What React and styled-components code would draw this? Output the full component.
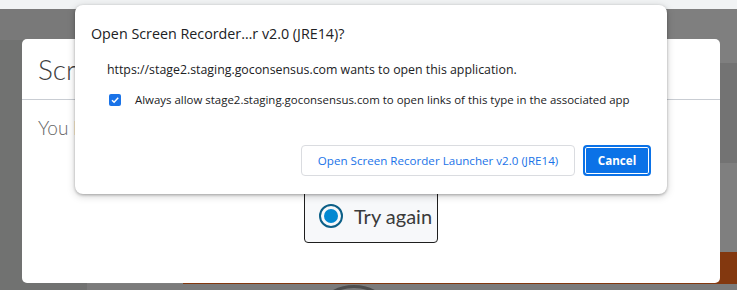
import React from 'react'
import styled, { createGlobalStyle } from 'styled-components'

const GlobalStyle = createGlobalStyle`
  html, body {
    margin: 0;
    padding: 0;
    background: #7f7f7f;
  }
  * {
    box-sizing: border-box;
  }
`

const Page = styled.div`
  position: relative;
  width: 737px;
  height: 290px;
  overflow: hidden;
  background: #7f7f7f;
  font-family: 'Open Sans', 'Noto Sans', sans-serif;
`

const ChromeStrip = styled.div`
  height: 9px;
  background: #f1f3f4;
`

const Shell = styled.div`
  display: flex;
  height: 281px;
`

const SideRail = styled.div`
  width: 87px;
  flex-shrink: 0;
  background: linear-gradient(#797979 0 31px, #717271 31px);
`

const MainCol = styled.div`
  flex: 1;
  display: flex;
  flex-direction: column;
`

const Band = styled.div`
  height: ${p => p.h}px;
  flex-shrink: 0;
  background: ${p => p.color};
`

const FooterRow = styled.div`
  display: flex;
  height: 32px;
  flex-shrink: 0;
`

const FooterGap = styled.div`
  width: 96px;
  background: #7f7f7f;
`

const FooterBar = styled.div`
  flex: 1;
  background: #83380f;
`

const BottomRow = styled.div`
  flex: 1;
  overflow: hidden;
  display: flex;
  background: #7b7b7b;
`

const RecordRing = styled.div`
  width: 90px;
  height: 90px;
  margin: 1px 0 0 222px;
  flex-shrink: 0;
  border: 3px solid #4d4d4d;
  border-radius: 50%;
`

/* page modal underneath the browser prompt */
const Modal = styled.div`
  position: absolute;
  left: 22px;
  top: 39px;
  width: 698px;
  height: 244px;
  background: #fff;
  border-radius: 5px;
  display: flex;
  flex-direction: column;
  font-family: Lato, 'Open Sans', sans-serif;
`

const ModalHeader = styled.div`
  height: 61px;
  flex-shrink: 0;
  display: flex;
  align-items: center;
  padding: 0 16px;
  border-bottom: 1px solid #c9cdd3;
  font-size: 28px;
  font-weight: 300;
  color: #3f3f3f;
  white-space: nowrap;
`

const ModalBody = styled.div`
  flex: 1;
  display: flex;
  flex-direction: column;
  padding: 14px 16px 0;
`

const BodyText = styled.div`
  font-size: 19px;
  font-weight: 300;
  color: #666;
  line-height: 28px;
  white-space: nowrap;
`

const ChoiceButton = styled.div`
  align-self: center;
  margin-top: 46px;
  width: 134px;
  height: 55px;
  display: flex;
  align-items: center;
  gap: 11px;
  padding-left: 14px;
  background: #f7f8fa;
  border: 1px solid #1e1e1e;
  border-radius: 4px;
  font-size: 20px;
  color: #3a3a3a;
  white-space: nowrap;
`

const Radio = styled.span`
  width: 24px;
  height: 24px;
  flex-shrink: 0;
  border-radius: 50%;
  border: 2.5px solid #0c5f87;
  display: flex;
  align-items: center;
  justify-content: center;

  &::after {
    content: '';
    width: 14px;
    height: 14px;
    border-radius: 50%;
    background: #0288d1;
  }
`

/* browser external-protocol prompt */
const Prompt = styled.div`
  position: absolute;
  left: 75px;
  top: 5px;
  width: 592px;
  height: 189px;
  background: #fff;
  border-radius: 8px;
  box-shadow: 0 1px 3px rgba(0, 0, 0, 0.28), 0 2px 8px rgba(0, 0, 0, 0.18);
  padding: 19px 16px 0;
  display: flex;
  flex-direction: column;
  color: #202124;
  white-space: nowrap;
`

const PromptTitle = styled.div`
  font-size: 14.3px;
  line-height: 20px;
`

const PromptText = styled.div`
  margin: 17px 0 0 16px;
  font-size: 12.35px;
  line-height: 18px;
`

const CheckRow = styled.label`
  display: flex;
  align-items: center;
  gap: 14px;
  margin: 13px 0 0 18px;
  font-size: 11.45px;
  line-height: 16px;
`

const CheckBox = styled.span`
  width: 12px;
  height: 12px;
  flex-shrink: 0;
  border-radius: 2px;
  background: #1a73e8;
  display: flex;
  align-items: center;
  justify-content: center;
`

const ButtonRow = styled.div`
  display: flex;
  justify-content: flex-end;
  gap: 8px;
  margin-top: 37px;
`

const Button = styled.button`
  height: 31px;
  padding: 0;
  border-radius: 4px;
  font-family: inherit;
  font-size: 11.6px;
  font-weight: ${p => (p.primary ? 700 : 500)};
  color: ${p => (p.primary ? '#fff' : '#1a73e8')};
  background: ${p => (p.primary ? '#0b72e7' : '#fff')};
  border: ${p => (p.primary ? '2px solid #0b72e7' : '1px solid #dadce0')};
  box-shadow: ${p => (p.primary ? 'inset 0 0 0 1px #fff' : 'none')};
  width: ${p => p.w}px;
  white-space: nowrap;
`

export default function App() {
  return (
    <>
      <GlobalStyle />
      <Page>
        <ChromeStrip />
        <Shell>
          <SideRail />
          <MainCol>
            <Band h={54} color="#7f7f7f" />
            <Band h={100} color="#737373" />
            <Band h={89} color="#7f7f7f" />
            <FooterRow>
              <FooterGap />
              <FooterBar />
            </FooterRow>
            <BottomRow>
              <RecordRing />
            </BottomRow>
          </MainCol>
        </Shell>

        <Modal>
          <ModalHeader>Screen Recorder</ModalHeader>
          <ModalBody>
            <BodyText>You have to allow the Screen Recorder Launcher to open.</BodyText>
            <ChoiceButton>
              <Radio />
              Try again
            </ChoiceButton>
          </ModalBody>
        </Modal>

        <Prompt>
          <PromptTitle>Open Screen Recorder…r v2.0 (JRE14)?</PromptTitle>
          <PromptText>
            https://stage2.staging.goconsensus.com wants to open this application.
          </PromptText>
          <CheckRow>
            <CheckBox>
              <svg width="10" height="10" viewBox="0 0 10 10">
                <path d="M2 5.2 L4.1 7.2 L8.2 2.8" fill="none" stroke="#fff" strokeWidth="1.5" />
              </svg>
            </CheckBox>
            Always allow stage2.staging.goconsensus.com to open links of this type in the associated app
          </CheckRow>
          <ButtonRow>
            <Button w={274}>Open Screen Recorder Launcher v2.0 (JRE14)</Button>
            <Button primary w={68}>Cancel</Button>
          </ButtonRow>
        </Prompt>
      </Page>
    </>
  )
}
